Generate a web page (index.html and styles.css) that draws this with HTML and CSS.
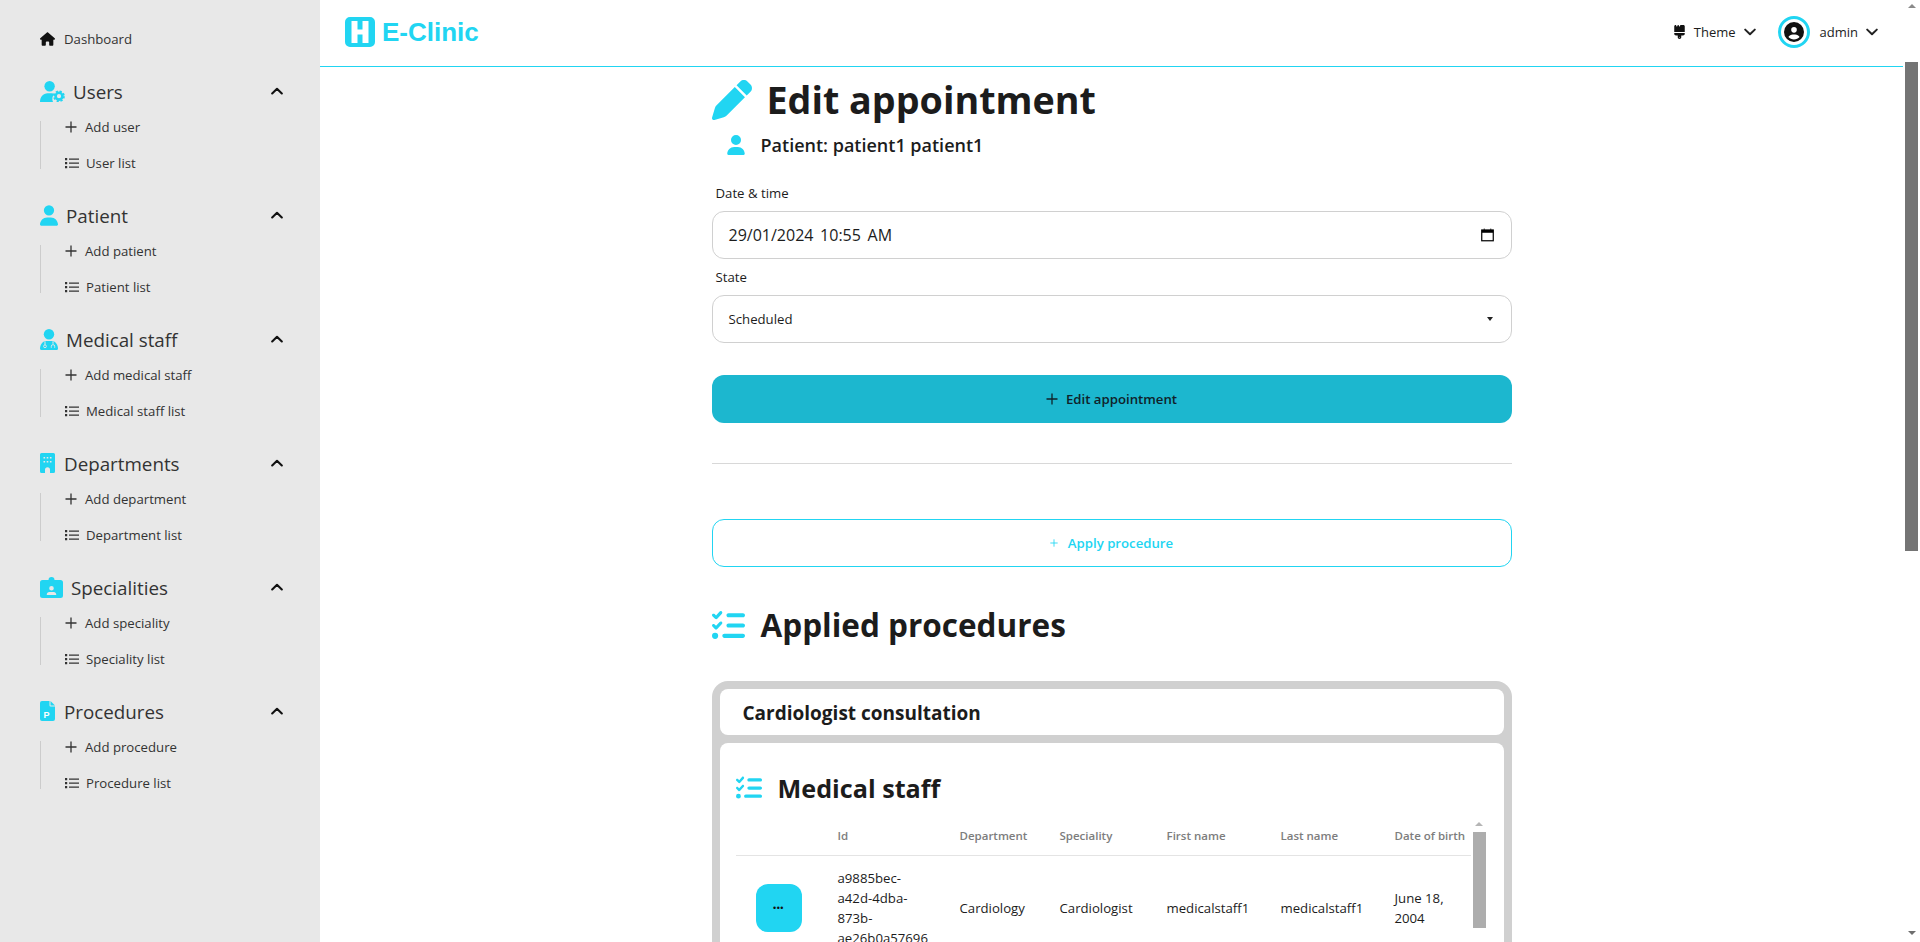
FILE: index.html
```html
<!DOCTYPE html>
<html lang="en">

<head>
  <meta charset="UTF-8">
  <meta name="viewport" content="width=device-width, initial-scale=1.0">
  <title>E-Clinic</title>
  <link rel="stylesheet" href="styles.css">
</head>

<body>
  <svg class="icon-defs" xmlns="http://www.w3.org/2000/svg">
    <symbol id="i-plus" viewBox="0 0 12 12">
      <path d="M6 .5v11M.5 6h11" fill="none" stroke="currentColor" stroke-width="1.3" />
    </symbol>
    <symbol id="i-list" viewBox="0 0 14 12">
      <path d="M0 1h2.2v2.2H0zM0 5h2.2v2.2H0zM0 9h2.2v2.2H0z" fill="currentColor" />
      <path d="M4 2.1h10M4 6.1h10M4 10.1h10" fill="none" stroke="currentColor" stroke-width="1.3" />
    </symbol>
    <symbol id="i-up" viewBox="0 0 12 8">
      <path d="M1.2 6.4 6 1.8l4.8 4.6" fill="none" stroke="currentColor" stroke-width="2.1" stroke-linecap="round" stroke-linejoin="round" />
    </symbol>
    <symbol id="i-down" viewBox="0 0 12 8">
      <path d="M1.2 1.6 6 6.2l4.8-4.6" fill="none" stroke="currentColor" stroke-width="2" stroke-linecap="round" stroke-linejoin="round" />
    </symbol>
    <symbol id="i-user" viewBox="0 0 448 512">
      <path fill="currentColor" d="M224 256A128 128 0 1 0 224 0a128 128 0 1 0 0 256zm-45.7 48C79.8 304 0 383.8 0 482.3C0 498.7 13.3 512 29.7 512H418.3c16.4 0 29.7-13.3 29.7-29.7C448 383.8 368.2 304 269.7 304H178.3z" />
    </symbol>
    <symbol id="i-checks" viewBox="0 0 512 512">
      <path fill="currentColor" d="M152.1 38.2c9.9 8.9 10.7 24 1.8 33.9l-72 80c-4.4 4.9-10.6 7.8-17.2 7.9s-12.9-2.4-17.6-7L7 113C-2.3 103.6-2.3 88.4 7 79s24.6-9.4 33.9 0l22.1 22.1 55.1-61.2c8.9-9.9 24-10.7 33.9-1.8zm0 160c9.9 8.9 10.7 24 1.8 33.9l-72 80c-4.4 4.9-10.6 7.8-17.2 7.9s-12.9-2.4-17.6-7L7 273c-9.4-9.4-9.4-24.6 0-33.9s24.6-9.4 33.9 0l22.1 22.1 55.1-61.2c8.9-9.9 24-10.7 33.9-1.8zM224 96c0-17.7 14.3-32 32-32H480c17.7 0 32 14.3 32 32s-14.3 32-32 32H256c-17.7 0-32-14.3-32-32zm0 160c0-17.7 14.3-32 32-32H480c17.7 0 32 14.3 32 32s-14.3 32-32 32H256c-17.7 0-32-14.3-32-32zM160 416c0-17.7 14.3-32 32-32H480c17.7 0 32 14.3 32 32s-14.3 32-32 32H192c-17.7 0-32-14.3-32-32zM48 368a48 48 0 1 1 0 96 48 48 0 1 1 0-96z" />
    </symbol>
  </svg>

  <aside class="sidebar">
    <a class="dash-link">
      <svg class="home-icon" viewBox="0 0 576 512"><path fill="currentColor" d="M575.8 255.5c0 18-15 32.1-32 32.1h-32l.7 160.2c0 2.7-.2 5.4-.5 8.1V472c0 22.1-17.9 40-40 40H456c-1.1 0-2.2 0-3.3-.1c-1.4 .1-2.8 .1-4.2 .1H416 392c-22.1 0-40-17.9-40-40V448 384c0-17.7-14.3-32-32-32H256c-17.7 0-32 14.3-32 32v64 24c0 22.1-17.9 40-40 40H160 128.1c-1.5 0-3-.1-4.5-.2c-1.2 .1-2.4 .2-3.6 .2H104c-22.1 0-40-17.9-40-40V360c0-.9 0-1.9 .1-2.8V287.6H32c-18 0-32-14-32-32.1c0-9 3-17 10-24L266.4 8c7-7 15-8 22-8s15 2 21 7L564.8 231.5c8 7 12 15 11 24z" /></svg>
      <span>Dashboard</span>
    </a>

    <section class="nav-group">
      <div class="nav-title">
        <svg class="nav-icon nav-icon-users" viewBox="0 0 25 21">
          <circle cx="9.6" cy="5.2" r="5.2" fill="currentColor" />
          <path d="M0 21c0-5.2 3.2-8.8 7.6-8.8h4c1.1 0 2.1.2 3 .6A7.500 7.500 0 0 0 13 21z" fill="currentColor" />
          <circle cx="19" cy="15.200" r="3.400" fill="none" stroke="currentColor" stroke-width="2.600" />
          <circle cx="19" cy="15.200" r="5" fill="none" stroke="currentColor" stroke-width="1.700" stroke-dasharray="2.200 1.730" />
        </svg>
        <span>Users</span>
        <svg class="chevron"><use href="#i-up" /></svg>
      </div>
      <ul class="nav-list">
        <li><svg class="add-icon"><use href="#i-plus" /></svg>Add user</li>
        <li><svg class="list-icon"><use href="#i-list" /></svg>User list</li>
      </ul>
    </section>

    <section class="nav-group">
      <div class="nav-title">
        <svg class="nav-icon nav-icon-person"><use href="#i-user" /></svg>
        <span>Patient</span>
        <svg class="chevron"><use href="#i-up" /></svg>
      </div>
      <ul class="nav-list">
        <li><svg class="add-icon"><use href="#i-plus" /></svg>Add patient</li>
        <li><svg class="list-icon"><use href="#i-list" /></svg>Patient list</li>
      </ul>
    </section>

    <section class="nav-group">
      <div class="nav-title">
        <svg class="nav-icon nav-icon-person" viewBox="0 0 18 21">
          <circle cx="9" cy="5.200" r="5.200" fill="currentColor" />
          <path d="M0 19.800C0 15.400 2.800 12 6.400 12h5.200c3.600 0 6.400 3.400 6.400 7.800 0 .7-.5 1.200-1.200 1.200H1.200C.5 21 0 20.500 0 19.800z" fill="currentColor" />
          <path d="M5 12.500v3.300M13 12.500v2.300" stroke="#e8e8e8" stroke-width="1" fill="none" />
          <circle cx="5" cy="17.300" r="1.400" fill="none" stroke="#e8e8e8" stroke-width=".9" />
          <path d="M11.300 18.800v-1.500a1.700 1.700 0 0 1 3.400 0v1.500" fill="none" stroke="#e8e8e8" stroke-width=".9" />
        </svg>
        <span>Medical staff</span>
        <svg class="chevron"><use href="#i-up" /></svg>
      </div>
      <ul class="nav-list">
        <li><svg class="add-icon"><use href="#i-plus" /></svg>Add medical staff</li>
        <li><svg class="list-icon"><use href="#i-list" /></svg>Medical staff list</li>
      </ul>
    </section>

    <section class="nav-group">
      <div class="nav-title">
        <svg class="nav-icon nav-icon-tall" viewBox="0 0 15 20">
          <path fill="currentColor" fill-rule="evenodd" d="M1.500 0h12A1.500 1.500 0 0 1 15 1.500V18.500a1.500 1.500 0 0 1-1.500 1.500H10v-3.200a2.500 2.500 0 0 0-5 0V20H1.500A1.500 1.500 0 0 1 0 18.500V1.500A1.500 1.500 0 0 1 1.500 0zM3.500 4v1.600h1.600V4zM6.700 4v1.600h1.600V4zM9.900 4v1.600h1.600V4zM3.500 8v1.600h1.600V8zM6.700 8v1.600h1.600V8zM9.900 8v1.600h1.600V8z" />
        </svg>
        <span>Departments</span>
        <svg class="chevron"><use href="#i-up" /></svg>
      </div>
      <ul class="nav-list">
        <li><svg class="add-icon"><use href="#i-plus" /></svg>Add department</li>
        <li><svg class="list-icon"><use href="#i-list" /></svg>Department list</li>
      </ul>
    </section>

    <section class="nav-group">
      <div class="nav-title">
        <svg class="nav-icon nav-icon-badge" viewBox="0 0 23 21">
          <path fill="currentColor" fill-rule="evenodd" d="M2.500 3H8.500A3 3 0 0 1 14.500 3H20.500A2.500 2.500 0 0 1 23 5.500V18.500A2.500 2.500 0 0 1 20.500 21H2.500A2.500 2.500 0 0 1 0 18.500V5.500A2.500 2.500 0 0 1 2.500 3zM11.500 9a2.300 2.300 0 1 0 0 4.600 2.300 2.300 0 0 0 0-4.600zM6.800 18h9.400v-.8c0-1.300-1.100-2.300-2.400-2.300H9.200c-1.300 0-2.400 1-2.400 2.300z" />
        </svg>
        <span>Specialities</span>
        <svg class="chevron"><use href="#i-up" /></svg>
      </div>
      <ul class="nav-list">
        <li><svg class="add-icon"><use href="#i-plus" /></svg>Add speciality</li>
        <li><svg class="list-icon"><use href="#i-list" /></svg>Speciality list</li>
      </ul>
    </section>

    <section class="nav-group">
      <div class="nav-title">
        <svg class="nav-icon nav-icon-tall" viewBox="0 0 15 20">
          <path fill="currentColor" d="M2 0h7.500v4.500a1 1 0 0 0 1 1H15V18a2 2 0 0 1-2 2H2a2 2 0 0 1-2-2V2a2 2 0 0 1 2-2z" />
          <path fill="currentColor" d="M10.500 0 15 4.500h-4.500z" />
          <text class="file-letter" x="3.600" y="16.500">P</text>
        </svg>
        <span>Procedures</span>
        <svg class="chevron"><use href="#i-up" /></svg>
      </div>
      <ul class="nav-list">
        <li><svg class="add-icon"><use href="#i-plus" /></svg>Add procedure</li>
        <li><svg class="list-icon"><use href="#i-list" /></svg>Procedure list</li>
      </ul>
    </section>
  </aside>

  <main class="main">
    <header class="topbar">
      <div class="brand">
        <svg class="brand-icon" viewBox="0 0 30 30">
          <path fill="currentColor" fill-rule="evenodd" d="M5 0h20a5 5 0 0 1 5 5v20a5 5 0 0 1-5 5H5a5 5 0 0 1-5-5V5a5 5 0 0 1 5-5zM6.500 4v22h6v-8.500h5V26h6V4h-6v8.500h-5V4z" />
        </svg>
        <span class="brand-name">E-Clinic</span>
      </div>
      <div class="topbar-menu">
        <div class="menu-item">
          <svg class="brush-icon" viewBox="0 0 384 512"><path fill="currentColor" d="M162.4 6c-1.500-3.600-5-6-8.900-6h-19c-3.900 0-7.500 2.400-8.900 6L104.900 57.700c-3.200 8-14.600 8-17.800 0L66.400 6c-1.500-3.600-5-6-8.900-6H48C21.500 0 0 21.500 0 48V224v22.400V256H9.600 374.400 384v-9.600V224 48c0-26.500-21.500-48-48-48H230.500c-3.900 0-7.500 2.400-8.900 6L200.900 57.700c-3.200 8-14.600 8-17.800 0L162.400 6zM0 288v32c0 35.300 28.700 64 64 64h64v64c0 35.300 28.700 64 64 64s64-28.700 64-64V384h64c35.300 0 64-28.700 64-64V288H0zM192 432a16 16 0 1 1 0 32 16 16 0 1 1 0-32z" /></svg>
          <span>Theme</span>
          <svg class="menu-chevron"><use href="#i-down" /></svg>
        </div>
        <div class="menu-item">
          <span class="avatar">
            <svg viewBox="0 0 512 512"><path fill="currentColor" d="M399 384.200C376.900 345.800 335.400 320 288 320H224c-47.400 0-88.900 25.800-111 64.200c35.200 39.200 86.200 63.800 143 63.800s107.800-24.700 143-63.800zM0 256a256 256 0 1 1 512 0A256 256 0 1 1 0 256zm256 16a72 72 0 1 0 0-144 72 72 0 1 0 0 144z" /></svg>
          </span>
          <span>admin</span>
          <svg class="menu-chevron"><use href="#i-down" /></svg>
        </div>
      </div>
    </header>

    <div class="page">
      <h1 class="page-title">
        <svg class="pen-icon" viewBox="0 0 512 512"><path fill="currentColor" d="M362.700 19.300L314.300 67.700 444.300 197.700l48.400-48.400c25-25 25-65.500 0-90.500L453.300 19.300c-25-25-65.500-25-90.500 0zm-71 71L58.600 323.500c-10.400 10.400-18 23.300-22.200 37.400L1 481.200C-1.500 489.700 .8 498.800 7 505s15.300 8.500 23.700 6.100l120.300-35.400c14.100-4.200 27-11.800 37.400-22.200L421.700 220.300 291.700 90.300z" /></svg>
        <span>Edit appointment</span>
      </h1>
      <div class="patient-line">
        <svg class="patient-icon"><use href="#i-user" /></svg>
        <span>Patient: patient1 patient1</span>
      </div>

      <label class="field-label">Date &amp; time</label>
      <div class="field field-date">
        <span>29/01/2024 10:55 AM</span>
        <svg class="calendar-icon" viewBox="0 0 14 14">
          <path d="M3.500 0v2M10.500 0v2" stroke="#333" stroke-width="1" />
          <rect x=".8" y="1.600" width="12.400" height="11.600" fill="none" stroke="#000" stroke-width="1.300" />
          <rect x=".8" y="1.600" width="12.400" height="3" fill="#000" />
        </svg>
      </div>

      <label class="field-label">State</label>
      <div class="field field-select">
        <span>Scheduled</span>
        <span class="select-arrow"></span>
      </div>

      <button class="btn btn-primary" type="button">
        <svg class="add-icon"><use href="#i-plus" /></svg>Edit appointment
      </button>

      <div class="divider"></div>

      <button class="btn btn-outline" type="button">
        <svg class="add-small"><use href="#i-plus" /></svg>Apply procedure
      </button>

      <h2 class="section-title">
        <svg class="checks-icon"><use href="#i-checks" /></svg>
        <span>Applied procedures</span>
      </h2>

      <div class="procedure-card">
        <div class="procedure-name">Cardiologist consultation</div>
        <div class="procedure-body">
          <h3 class="staff-title">
            <svg class="checks-icon-sm"><use href="#i-checks" /></svg>
            <span>Medical staff</span>
          </h3>
          <div class="table-scroll">
            <table class="staff-table">
              <thead>
                <tr>
                  <th></th>
                  <th>Id</th>
                  <th>Department</th>
                  <th>Speciality</th>
                  <th>First name</th>
                  <th>Last name</th>
                  <th>Date of birth</th>
                </tr>
              </thead>
              <tbody>
                <tr>
                  <td><button class="dots-btn" type="button">&#8226;&#8226;&#8226;</button></td>
                  <td>a9885bec-a42d-4dba-873b-ae26b0a57696</td>
                  <td>Cardiology</td>
                  <td>Cardiologist</td>
                  <td>medicalstaff1</td>
                  <td>medicalstaff1</td>
                  <td>June 18, 2004</td>
                </tr>
              </tbody>
            </table>
            <div class="rail rail-table">
              <span class="arrow-up"></span>
              <span class="thumb"></span>
            </div>
          </div>
        </div>
      </div>
    </div>
  </main>

  <div class="rail rail-page">
    <span class="arrow-up"></span>
    <span class="thumb"></span>
    <span class="arrow-down"></span>
  </div>
</body>

</html>
```

FILE: styles.css
```css
*,
*::before,
*::after {
  box-sizing: border-box;
}

:root {
  --cyan: #21d5f2;
  --text: #1c1c1c;
  --line: #d0d0d0;
}

html,
body {
  height: 100%;
  margin: 0;
}

body {
  display: grid;
  grid-template-columns: 320px 1fr 17px;
  overflow: hidden;
  font-family: "Open Sans", "Noto Sans", sans-serif;
  font-size: 14px;
  line-height: 20px;
  color: var(--text);
  background: #fff;
}

.icon-defs {
  display: none;
}

svg {
  display: block;
  flex: none;
}

/* sidebar */
.sidebar {
  background: #e8e8e8;
  padding: 29px 0 0 40px;
  color: #333;
  overflow: hidden;
}

.dash-link {
  display: flex;
  align-items: center;
  gap: 9px;
  height: 20px;
  margin-bottom: 28px;
  font-size: 13.2px;
}

.home-icon {
  width: 15px;
  height: 14px;
  color: #111;
}

.nav-group {
  margin-bottom: 32px;
}

.nav-title {
  display: flex;
  align-items: center;
  height: 28px;
  width: 243px;
  font-size: 18.8px;
}

.nav-title span {
  padding-top: 2px;
}

.nav-title .chevron {
  width: 12px;
  height: 8px;
  margin-left: auto;
  color: #111;
}

.nav-icon {
  color: var(--cyan);
  height: 21px;
}

.nav-icon-users {
  width: 25px;
  margin-right: 8px;
}

.nav-icon-person {
  width: 18px;
  margin-right: 8px;
}

.nav-icon-tall {
  width: 15px;
  height: 20px;
  margin-right: 9px;
}

.nav-icon-badge {
  width: 23px;
  margin-right: 8px;
}

.file-letter {
  font: bold 9px "Liberation Sans", sans-serif;
  fill: #fff;
}

.nav-list {
  list-style: none;
  margin: 16px 0 0;
  padding: 0 0 0 24px;
  border-left: 1px solid #ccc;
  display: flex;
  flex-direction: column;
  gap: 24px;
  font-size: 13.2px;
}

.nav-list li {
  display: flex;
  align-items: center;
  height: 12px;
}

.nav-list .add-icon {
  margin-right: 8px;
}

.add-icon {
  width: 12px;
  height: 12px;
}

.list-icon {
  width: 14px;
  height: 12px;
  margin-right: 7px;
}

/* top bar */
.main {
  height: 100vh;
  overflow: hidden;
}

.topbar {
  display: flex;
  align-items: center;
  justify-content: space-between;
  height: 67px;
  padding: 0 25px 2px 25px;
  background: #fff;
  border-bottom: 1px solid var(--cyan);
}

.brand {
  display: flex;
  align-items: center;
  gap: 7px;
  color: var(--cyan);
}

.brand-icon {
  width: 30px;
  height: 30px;
}

.brand-name {
  font: bold 26px/30px "Liberation Sans", sans-serif;
}

.topbar-menu {
  display: flex;
  align-items: center;
  gap: 22px;
  font-size: 13px;
}

.menu-item {
  display: flex;
  align-items: center;
}

.brush-icon {
  width: 11px;
  height: 14px;
  margin-right: 9px;
  color: #111;
}

.menu-chevron {
  width: 12px;
  height: 8px;
  margin-left: 8px;
  color: #222;
}

.avatar {
  width: 32px;
  height: 32px;
  padding: 3px;
  margin-right: 10px;
  border-radius: 50%;
  border: 3px solid var(--cyan);
  color: #111;
}

/* page */
.page {
  width: 800px;
  margin: 0 auto;
  padding-top: 13px;
}

.page-title {
  display: flex;
  align-items: center;
  gap: 15px;
  height: 40px;
  margin: 0;
  font-size: 37.7px;
  line-height: 40px;
  font-weight: 700;
}

.pen-icon {
  width: 40px;
  height: 40px;
  color: var(--cyan);
}

.patient-line {
  display: flex;
  align-items: center;
  gap: 16px;
  height: 20px;
  margin: 15px 0 28px 15px;
  font-size: 18px;
  font-weight: 600;
}

.patient-icon {
  width: 18px;
  height: 20px;
  color: var(--cyan);
}

.field-label {
  display: block;
  height: 20px;
  margin: 0 0 8px 4px;
  font-size: 13.2px;
}

.field {
  display: flex;
  align-items: center;
  justify-content: space-between;
  height: 48px;
  margin-bottom: 8px;
  padding: 0 16px;
  border: 1px solid var(--line);
  border-radius: 12px;
}

.field-date {
  font-size: 16px;
  word-spacing: 2.5px;
}

.field-select {
  font-size: 13.2px;
  margin-bottom: 32px;
}

.calendar-icon {
  width: 13px;
  height: 14px;
  margin-right: 1px;
}

.select-arrow {
  width: 0;
  height: 0;
  margin-right: 2px;
  border: 3px solid transparent;
  border-top: 4px solid #222;
  border-bottom: 0;
}

.btn {
  display: flex;
  align-items: center;
  justify-content: center;
  width: 100%;
  height: 48px;
  border-radius: 12px;
  font-family: inherit;
  font-size: 13.2px;
  font-weight: 600;
}

.btn-primary {
  gap: 8px;
  border: 0;
  color: #10222a;
  background: #1cb7cf;
}

.divider {
  height: 1px;
  margin: 40px 0 55px;
  background: #d8d8d8;
}

.btn-outline {
  gap: 10px;
  border: 1px solid var(--cyan);
  color: var(--cyan);
  background: #fff;
}

.add-small {
  width: 8px;
  height: 8px;
}

.section-title {
  display: flex;
  align-items: center;
  gap: 16px;
  height: 40px;
  margin: 38px 0 36px;
  font-size: 31.5px;
  line-height: 40px;
}

.checks-icon {
  width: 33px;
  height: 33px;
  color: var(--cyan);
}

.procedure-card {
  padding: 8px;
  border-radius: 16px;
  background: var(--line);
}

.procedure-name {
  display: flex;
  align-items: center;
  height: 46px;
  padding: 2px 0 0 23px;
  margin-bottom: 8px;
  border-radius: 8px;
  background: #fff;
  font-size: 19px;
  font-weight: 700;
}

.procedure-body {
  padding: 25px 16px 16px;
  border-radius: 8px;
  background: #fff;
}

.staff-title {
  display: flex;
  align-items: center;
  gap: 16px;
  height: 40px;
  margin: 0 0 10px;
  font-size: 25.2px;
  line-height: 40px;
}

.checks-icon-sm {
  width: 26px;
  height: 26px;
  color: var(--cyan);
}

.table-scroll {
  display: flex;
  height: 224px;
}

.staff-table {
  width: 735px;
  height: max-content;
  table-layout: fixed;
  border-collapse: collapse;
  font-size: 13.2px;
}

.staff-table th {
  height: 37px;
  padding: 0 0 0 16px;
  border-bottom: 1px solid #e4e4e4;
  color: #7d7d7d;
  font-size: 11.5px;
  font-weight: 600;
  text-align: left;
  white-space: nowrap;
}

.staff-table th:nth-child(1) { width: 86px; }
.staff-table th:nth-child(2) { width: 122px; }
.staff-table th:nth-child(3) { width: 100px; }
.staff-table th:nth-child(4) { width: 107px; }
.staff-table th:nth-child(5) { width: 114px; }
.staff-table th:nth-child(6) { width: 114px; }

.staff-table td {
  padding: 12px 16px;
}

.staff-table td:first-child {
  padding: 0;
}

.dots-btn {
  display: block;
  width: 46px;
  height: 48px;
  margin: 0 auto;
  padding: 0;
  border: 0;
  border-radius: 12px;
  background: var(--cyan);
  color: #111;
  font-size: 9px;
  letter-spacing: .5px;
}

/* scrollbars, drawn because the page itself does not scroll */
.rail {
  display: flex;
  flex-direction: column;
  align-items: center;
  width: 17px;
  flex: none;
  background: #fff;
}

.arrow-up,
.arrow-down {
  width: 0;
  height: 0;
  border: 4px solid transparent;
  border-top-width: 0;
  border-bottom-color: #8a8a8a;
  margin-top: 4px;
}

.arrow-down {
  margin-top: auto;
  margin-bottom: 7px;
  border-width: 4px 4px 0;
  border-color: #6e6e6e transparent transparent;
}

.thumb {
  width: 13px;
}

.rail-page {
  height: 100vh;
}

.rail-page .thumb {
  height: 489px;
  margin-top: 54px;
  background: #747474;
}

.rail-table .arrow-up {
  border-bottom-color: #b5b5b5;
}

.rail-table .thumb {
  height: 96px;
  margin-top: 6px;
  background: #adadad;
}
```
